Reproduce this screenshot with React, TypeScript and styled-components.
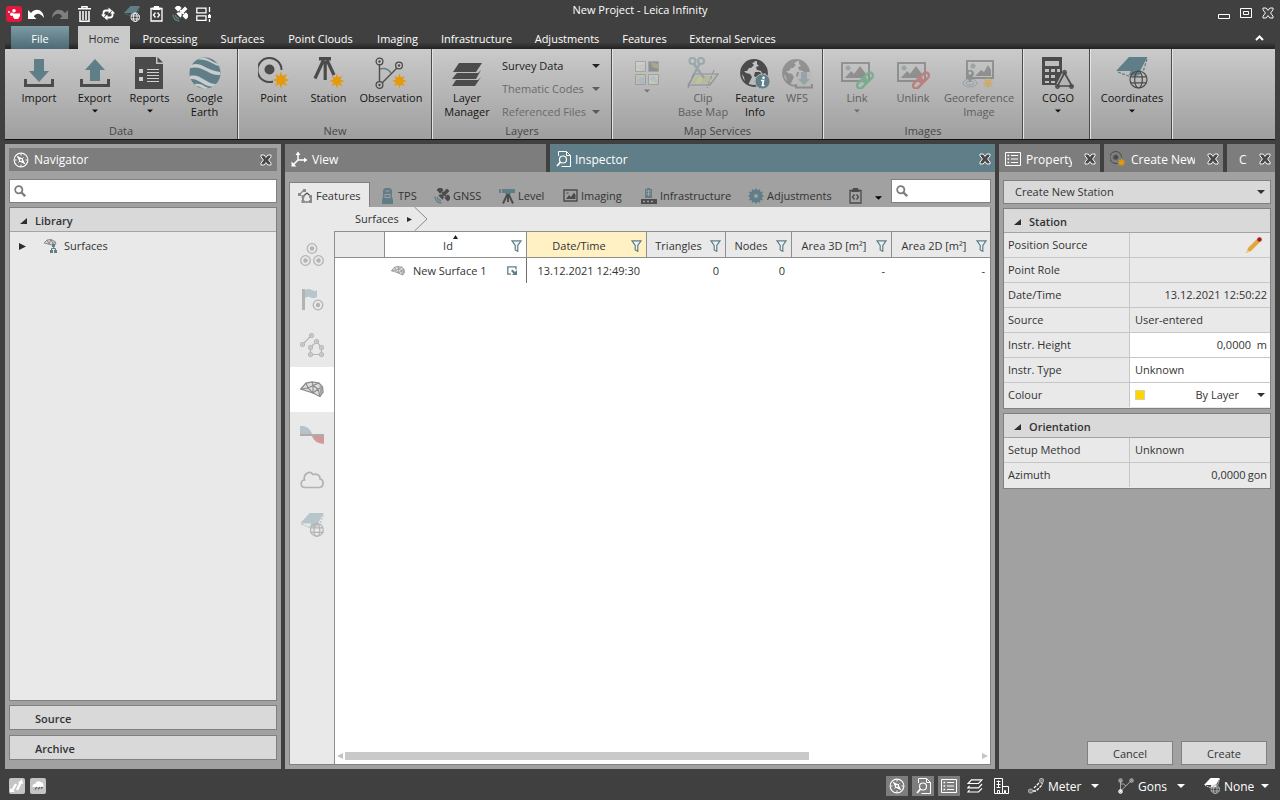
import React from 'react';
import styled, { createGlobalStyle, css } from 'styled-components';

/* ---------- palette ---------- */
const c = {
  frame: '#404040',
  panel: '#a1a1a1',
  head: '#7d7d7d',
  teal: '#5f7e88',
  line: '#808080',
  cell: '#e9e9e9',
  group: '#d9d9d9',
  ink: '#333333',
  icon: '#4b4b4b',
  amber: '#e59a0c',
};

const GlobalStyle = createGlobalStyle`
  * { box-sizing: border-box; }
  html, body { margin: 0; padding: 0; background: ${c.frame}; }
  body, button, input, select, table {
    font-family: "Open Sans", "Noto Sans", sans-serif;
    font-size: 11px;
    line-height: 14px;
    color: ${c.ink};
  }
  button { border: 0; padding: 0; background: none; }
  svg { display: block; flex: none; }
`;

/* ---------- icons ---------- */
type IconProps = { w?: number; h?: number; box?: string; children?: React.ReactNode };
const Svg = ({ w = 16, h = w, box = `0 0 ${w} ${h}`, children }: IconProps) => (
  <svg width={w} height={h} viewBox={box} fill="none" aria-hidden="true">{children}</svg>
);

const burstPoints = (cx: number, cy: number, outer: number, inner: number, n: number) =>
  Array.from({ length: n * 2 }, (_, i) => {
    const r = i % 2 ? inner : outer;
    const a = (Math.PI * i) / n - Math.PI / 2;
    return `${(cx + r * Math.cos(a)).toFixed(2)},${(cy + r * Math.sin(a)).toFixed(2)}`;
  }).join(' ');

const Burst = ({ x, y, r = 8 }: { x: number; y: number; r?: number }) => (
  <polygon points={burstPoints(x, y, r, r * 0.5, 8)} fill={c.amber} />
);

const Ring = ({ x, y, r = 3, color = c.icon, dot = 1.2, sw = 1.3 }: { x: number; y: number; r?: number; color?: string; dot?: number; sw?: number }) => (
  <>
    <circle cx={x} cy={y} r={r} stroke={color} strokeWidth={sw} />
    <circle cx={x} cy={y} r={dot} fill={color} />
  </>
);

const CloseIcon = () => (
  <Svg w={12} h={12}>
    <path d="M1 1H4.2L6 3.400 7.800 1H11V2.800L8.600 6 11 9.200V11H7.800L6 8.600 4.200 11H1V9.200L3.400 6 1 2.800Z" fill="#484848" stroke="#f4f4f4" strokeWidth="1" />
  </Svg>
);

const Globe = ({ x, y, r, color = c.icon, sw = 1.2 }: { x: number; y: number; r: number; color?: string; sw?: number }) => (
  <g stroke={color} strokeWidth={sw}>
    <circle cx={x} cy={y} r={r} />
    <ellipse cx={x} cy={y} rx={r * 0.45} ry={r} />
    <path d={`M${x - r} ${y - r * 0.3}H${x + r}M${x - r} ${y + r * 0.4}H${x + r}`} />
  </g>
);

const CoordIcon = ({ size = 32, top = c.teal, line = c.icon, sw = 1.2 }: { size?: number; top?: string; line?: string; sw?: number }) => (
  <Svg w={size} box="0 0 32 32">
    <path d="M0 14 13 0H31.500L24 14Z" fill={top} />
    <path d="M2 15 15 20M31 2 27 15" stroke={top} strokeWidth={sw} strokeDasharray="3 1.500" />
    <path d="M16 11 20 13 24 11 25 17 20 19 13 18Z" fill={top} />
    <Globe x={22.500} y={22.500} r={8.500} color={line} sw={sw} />
  </Svg>
);

const Continents = () => (
  <>
    <circle cx="15" cy="15" r="13" stroke={c.icon} strokeWidth="1.800" />
    <path d="M4 8 9 3 14 2 16 4 13 5 15 7 12 10 10 10 8 13 5 13 7 15 11 16 13 19 11 23 9 27 6 24 5 19 2 15Z" fill={c.icon} />
    <path d="M18 2.500 24 5 28 11 28 17 26 15 24 17 22 13 18 12 17 9 20 8 18 6Z" fill={c.icon} />
    <path d="M16 14 21 14 24 18 22 21 20 26 18 25 18 20 15 18Z" fill={c.icon} />
  </>
);

const PictureIcon = ({ children }: { children?: React.ReactNode }) => (
  <Svg w={34} h={32}>
    <rect x="2" y="6" width="27" height="18" stroke={c.icon} strokeWidth="2" />
    <circle cx="8" cy="11" r="2.500" fill={c.teal} />
    <path d="M5 21 11 14 14 17 20 9 26 17V21Z" fill={c.icon} />
    {children}
  </Svg>
);

const ChainLink = ({ color }: { color: string }) => (
  <g stroke={color} strokeWidth="2.400" transform="rotate(-45 25 23.500)">
    <rect x="15" y="20.500" width="11.500" height="6" rx="3" />
    <rect x="23.500" y="20.500" width="11.500" height="6" rx="3" />
  </g>
);

const ImportIcon = () => (
  <Svg w={32}>
    <path d="M11 2H21V14H26L16 25 6 14H11Z" fill={c.teal} />
    <path d="M1 22H4V27H28V22H31V30H1Z" fill={c.icon} />
  </Svg>
);
const ExportIcon = () => (
  <Svg w={32}>
    <path d="M16 2 26 13H21V24H11V13H6Z" fill={c.teal} />
    <path d="M1 22H4V27H28V22H31V30H1Z" fill={c.icon} />
  </Svg>
);
const ReportsIcon = () => (
  <Svg w={30} h={32}>
    <path d="M0 0H21V7H28V32H0Z" fill={c.icon} />
    <path d="M22.500 0 28 5.500H22.500Z" fill={c.icon} />
    <path d="M4 12H8V16H4ZM4 20H8V24H4Z" fill="#d0d0d0" />
    <path d="M12 12.500H24M12 15.500H24M12 18.500H24M12 21.500H24M12 24.500H24" stroke="#d0d0d0" />
  </Svg>
);
const EarthIcon = () => (
  <Svg w={32}>
    <circle cx="16" cy="16" r="15.500" fill={c.teal} />
    <path d="M2 8C12 4 18 14 31 15L31.500 18C19 19 15 8 1 11ZM1 19C11 16 17 27 27 27L24 29.500C15 30 10 21 1 22ZM8 3C17 1 22 7 30 9L29 7C23 5 19 0 12 1ZM6 27C13 26 15 30 20 31L16 32C11 31 11 29 7 29Z" fill="#c9cdce" />
  </Svg>
);
const PointIcon = ({ size = 32 }: { size?: number }) => (
  <Svg w={size} box="0 0 32 32">
    <path d="M15 24.500A12 12 0 1 1 23.500 13" stroke={c.icon} strokeWidth="2" />
    <circle cx="11.500" cy="12.500" r="5" fill={c.icon} />
    <Burst x={23} y={23} r={8.500} />
  </Svg>
);
const StationIcon = () => (
  <Svg w={32}>
    <path d="M6 0H18V3.500H6Z" fill={c.icon} />
    <path d="M10.500 3 2 21.500M14 3 21 18M12.200 4V23" stroke={c.icon} strokeWidth="3.200" />
    <Burst x={24} y={24} r={7.500} />
  </Svg>
);
const ObservationIcon = () => (
  <Svg w={32}>
    <path d="M4.500 7V25M7 26 22 11" stroke={c.icon} strokeWidth="1.400" />
    <path d="M5 12Q12 10 16 16" stroke={c.teal} strokeWidth="1.600" />
    <Ring x={4.500} y={4.500} r={3.400} /><Ring x={4.500} y={28} r={3.400} /><Ring x={24} y={8.500} r={3.400} />
    <Burst x={24.500} y={24} r={7.500} />
  </Svg>
);
const LayersIcon = () => (
  <Svg w={34} h={32}>
    <path d="M9 6H32L26 15H3ZM7 16H28L31 13 26 22H2L6 17M6 23H28L31 20 25 29H2Z" fill={c.icon} />
  </Svg>
);
const TilesIcon = () => (
  <Svg w={26} h={28}>
    <g stroke="#777">
      <path d="M1.500 4.500H11.500V14.500H1.500Z" fill="#d9e0da" />
      <path d="M14.500 4.500H24.500V14.500H14.500Z" fill="#3d4c50" />
      <path d="M1.500 17.500H11.500V27.500H1.500Z" fill="#b9cf9c" />
      <path d="M14.500 17.500H24.500V27.500H14.500Z" fill="#d8dcc8" />
    </g>
    <path d="M2 9 6 8 11 6V14H7Z" fill="#c6cfc0" /><path d="M17 5 24 7V12L18 10Z" fill="#8a7b3c" />
    <path d="M2 23 7 20 11 21V27H7Z" fill="#9ab9c9" /><path d="M15 22 20 18 24 24V27Z" fill="#aac3d1" />
  </Svg>
);
const ClipIcon = () => (
  <Svg w={32}>
    <path d="M8 17H31L23 28H1Z" stroke={c.icon} strokeWidth="1.200" />
    <path d="M10 19H27L21 26H5Z" fill="#9fbf74" /><path d="M12 20 17 19 14 26H8Z" fill="#e2c558" />
    <circle cx="5.500" cy="4" r="3" stroke={c.teal} strokeWidth="2" />
    <circle cx="14" cy="4" r="3" stroke={c.teal} strokeWidth="2" />
    <path d="M7 7 17 21M12.500 7 5 21" stroke={c.teal} strokeWidth="2.600" />
    <path d="M7 17 1 31M27 13 20 31" stroke={c.icon} strokeDasharray="4 2" />
  </Svg>
);
const FeatureInfoIcon = () => (
  <Svg w={32}>
    <g transform="translate(0 1)"><Continents /></g>
    <circle cx="23.500" cy="24.500" r="7.500" fill={c.teal} stroke="#b5b5b5" />
    <circle cx="24.500" cy="20.700" r="1.300" fill="#fff" />
    <path d="M22 23.500H24.500L23.500 28.500H25.500" stroke="#fff" strokeWidth="1.700" />
  </Svg>
);
const WfsIcon = () => (
  <Svg w={32}>
    <g transform="translate(0 1)"><Continents /></g>
    <path d="M18 15H31V30H16V22Z" fill="#b5b5b5" />
    <path d="M20 15H26V22H29L23 28 17 22H20Z" fill={c.teal} />
    <path d="M15 27V30.500H31V27" stroke={c.icon} strokeWidth="2" />
  </Svg>
);
const GeorefIcon = () => (
  <Svg w={34} h={32}>
    <rect x="5" y="4" width="26" height="17" stroke={c.icon} strokeWidth="2" />
    <circle cx="11" cy="9" r="2.500" fill={c.teal} />
    <path d="M13 19 19 13 22 15 26 8 29 13V19Z" fill={c.icon} />
    <ellipse cx="8" cy="26" rx="7" ry="4" stroke={c.teal} /><ellipse cx="8" cy="26" rx="4" ry="2" stroke={c.teal} />
    <path d="M8 26 4 17A4 4 0 1 1 12 17Z" fill={c.icon} />
    <circle cx="8" cy="16" r="1.500" fill="#ccc" />
    <Burst x={26} y={26} r={6} />
  </Svg>
);
const CogoIcon = () => (
  <Svg w={32}>
    <path d="M0 0H20V18L15 28H0Z" fill={c.icon} />
    <path d="M3 4H17V9H3Z" fill="#bebebe" />
    <path d="M3 12H7V15H3ZM9 12H13V15H9ZM15 12H18V15H15ZM3 18H7V21H3ZM9 18H13V21H9ZM3 24H7V26H3ZM9 24H13V26H9Z" fill="#bebebe" />
    <path d="M22.500 11 33 32H12Z" fill="#b4b4b4" />
    <path d="M22.500 16 30 29H15.500Z" stroke={c.icon} strokeWidth="1.600" />
    <Ring x={22.500} y={15.500} r={1.800} /><Ring x={29.500} y={29.500} r={1.800} /><Ring x={15.500} y={29.500} r={1.800} />
  </Svg>
);

const SearchIcon = () => (
  <Svg w={12}>
    <circle cx="4.800" cy="4.800" r="3.600" stroke={c.head} strokeWidth="1.800" />
    <path d="M7.500 7.500 11.200 11.200" stroke={c.head} strokeWidth="2.400" />
  </Svg>
);
const FilterIcon = () => (
  <Svg w={11} h={12}>
    <path d="M1 .8H10L6.800 5.500V11.300L4.200 10V5.500Z" fill="#eef1f2" stroke={c.teal} strokeWidth="1.200" />
  </Svg>
);
const CompassIcon = () => (
  <Svg w={16}>
    <circle cx="8" cy="8" r="6.900" stroke="#fff" strokeWidth="1.100" />
    <path d="M8 1.500V3.500M8 12.500V14.500M1.500 8H3.500M12.500 8H14.500" stroke="#fff" />
    <path d="M3.500 3.500 9.500 6.500 12.500 12.500 6.500 9.500Z" fill="#fff" />
    <path d="M10.500 5.500 5.500 10.500" stroke="#fff" strokeWidth="1" />
    <circle cx="8" cy="8" r="1" fill={c.head} />
  </Svg>
);
const AxesIcon = () => (
  <Svg w={17} h={16}>
    <path d="M7 2V9H15M7 9 2 14" stroke="#fff" strokeWidth="1.500" />
    <path d="M4.500 4 7 .5 9.500 4ZM13 6.500 16.500 9 13 11.500ZM.5 10.500V15.500H5.500Z" fill="#fff" />
  </Svg>
);
const InspectIcon = () => (
  <Svg w={15} h={16}>
    <path d="M2.500 5V.5H10.500L14.500 4.500V15.500H5.500M10.500 .5V4.500H14.500" stroke="#fff" />
    <circle cx="7" cy="8.500" r="3.500" stroke="#fff" strokeWidth="1.200" />
    <path d="M4.500 11 1 15" stroke="#fff" strokeWidth="1.800" />
  </Svg>
);
const ListIcon = () => (
  <Svg w={16} h={14}>
    <path d="M.5 .5H15.500V13.500H.5ZM6 3.500H13M6 7H13M6 10.500H13" stroke="#fff" />
    <path d="M2.500 2.700H4.200V4.300H2.500ZM2.500 6.200H4.200V7.800H2.500ZM2.500 9.700H4.200V11.300H2.500Z" fill="#fff" />
  </Svg>
);
const SatelliteIcon = ({ body = c.icon, wave = c.teal }: { body?: string; wave?: string }) => (
  <Svg w={16}>
    <g transform="rotate(45 10 6)" fill={body}>
      <path d="M2 3.500H7V8.500H2ZM13 3.500H18V8.500H13Z" />
      <path d="M7 5.300H13V6.700H7Z" />
      <path d="M8.200 0H11.800V7.500H8.200ZM7 11Q7.500 7.500 10 7.500T13 11Z" />
    </g>
    <path d="M1 8.500Q1.500 14.500 7.500 15M3.300 9Q3.800 12.200 7 12.700" stroke={wave} strokeWidth="1.400" />
  </Svg>
);
const SurfaceIcon = ({ size = 24, line = '#8a8a8a' }: { size?: number; line?: string }) => (
  <Svg w={size} h={Math.round(size * 0.7)} box="0 0 24 17">
    <path d="M.8 8 6 2 12 .8 19 2 22.500 6 23 11 20 15.500 13 12Z" fill="#dedede" stroke={line} strokeWidth="1.300" />
    <path d="M6 2 8 7 13 4.500 19 2M.8 8 8 7 13 12 13 4.500 12 .8M13 4.500 18 8 22.500 6M18 8 20 15.500M13 12 18 8" stroke={line} strokeWidth="1.100" />
    <path d="M19.500 4 22 6 22.500 11 20 14Z" fill="#a5a5a5" />
  </Svg>
);
const ClipboardIcon = ({ color = c.icon }: { color?: string }) => (
  <Svg w={13} h={16}>
    <path d="M1 2.500H12V15H1Z" stroke={color} strokeWidth="1.300" />
    <path d="M4 0H9V1.500H10.500V4H2.500V1.500H4Z" fill={color} />
    <path d="M5.500 6.500 3.500 9 5.500 11.500M7.500 6.500 9.500 9 7.500 11.500" stroke={color} strokeWidth="1.300" />
  </Svg>
);
const PolylineIcon = ({ color = '#b5b5b5' }: { color?: string }) => (
  <Svg w={24}>
    <path d="M4 10 10 4M10.500 19V17M13 21.500H19M21.500 19V17M12 13 14.500 10.500M18 10 20 13" stroke={color} strokeWidth="1.200" />
    {[[2.500, 11.500], [11.500, 2.500], [10.500, 14.500], [16.500, 8.500], [21.500, 14.500], [10.500, 21.500], [21.500, 21.500]].map(([x, y]) => (
      <Ring key={`${x}-${y}`} x={x} y={y} r={1.900} color={color} dot={0.800} sw={1.200} />
    ))}
  </Svg>
);
const Caret = ({ color = '#111', w = 8 }: { color?: string; w?: number }) => (
  <Svg w={w} h={4} box="0 0 8 4"><path d="M0 0H8L4 4Z" fill={color} /></Svg>
);
const Expanded = () => <Svg w={7} h={6}><path d="M7 0V6H0Z" fill="#2e2e2e" /></Svg>;
const Collapsed = ({ size = 6 }: { size?: number }) => <Svg w={size} box="0 0 6 6"><path d="M0 0 6 3 0 6Z" fill="#2e2e2e" /></Svg>;

/* ---------- shell ---------- */
const Window = styled.div`
  min-height: 100vh;
  display: flex;
  flex-direction: column;
  background: ${c.frame};
`;
const TitleBar = styled.header`
  display: grid;
  grid-template-columns: 1fr auto 1fr;
  height: 26px;
  padding: 0 6px;
`;
const QuickAccess = styled.div`
  display: flex;
  align-items: center;
  gap: 2px;
  padding-top: 2px;
`;
const QuickButtons = styled.div`display: flex;`;
const QuickButton = styled.button`
  width: 24px;
  height: 20px;
  display: grid;
  place-items: center;
`;
const WindowTitle = styled.h1`
  margin: 0;
  padding-top: 3px;
  font-size: 11px;
  font-weight: 400;
  color: #fff;
`;
const WindowButtons = styled.div`
  display: flex;
  justify-content: flex-end;
  align-items: center;
  gap: 10px;
`;
const TabStrip = styled.nav`
  display: flex;
  height: 23px;
  margin: 0 5px;
  padding-left: 6px;
  background: linear-gradient(${c.frame} 70%, #232323);
`;
const RibbonTab = styled.button<{ $w: number; $kind?: 'file' | 'active' }>`
  width: ${p => p.$w}px;
  padding-top: 2px;
  color: #fff;
  ${p => p.$kind === 'file' && css`
    margin-right: 9px;
    background: linear-gradient(#7f9aa4, #4c6b76);
  `}
  ${p => p.$kind === 'active' && css`
    margin-right: 1px;
    background: #cacaca;
    color: ${c.ink};
  `}
`;
const CollapseButton = styled.button`
  margin-left: auto;
  padding-right: 11px;
`;
const Ribbon = styled.section`
  display: flex;
  height: 91px;
  margin: 0 5px;
  background: linear-gradient(#cacaca, #9f9f9f);
  border-bottom: 1px solid #101010;
`;
const RibbonGroup = styled.div<{ $w: number }>`
  width: ${p => p.$w}px;
  flex: none;
  display: flex;
  flex-direction: column;
  border-right: 1px solid #4c4c4c;
  border-left: 1px solid #e4e4e4;
  &:first-child { border-left: 0; }
`;
const RibbonTail = styled.div`flex: 1; border-left: 1px solid #e4e4e4;`;
const GroupTools = styled.div<{ $pad: number }>`
  flex: 1;
  display: flex;
  align-items: flex-start;
  padding: 8px 0 0 ${p => p.$pad}px;
`;
const GroupName = styled.div`
  height: 15px;
  text-align: center;
  color: #454545;
`;
const ToolButton = styled.button<{ $w: number }>`
  width: ${p => p.$w}px;
  flex: none;
  display: flex;
  flex-direction: column;
  align-items: center;
  gap: 2px;
  color: #141414;
  white-space: pre;
  &:disabled { color: #5e5e5e; }
  &:disabled svg { opacity: 0.4; }
`;
const ToolText = styled.span`display: block;`;
const ToolCaret = styled.span`padding-top: 2px;`;
const DropList = styled.div`
  display: flex;
  flex-direction: column;
  gap: 9px;
  padding: 2px 0 0 7px;
`;
const DropButton = styled.button`
  width: 98px;
  display: flex;
  justify-content: space-between;
  align-items: center;
  white-space: nowrap;
  color: #1c1c1c;
  &:disabled { color: #6a6a6a; }
  &:disabled svg { opacity: 0.6; }
`;
const Workspace = styled.main`
  flex: 1;
  display: flex;
  gap: 4px;
  padding: 4px 5px 0;
`;

/* ---------- panels ---------- */
const SidePanel = styled.aside`
  width: 276px;
  flex: none;
  display: flex;
  flex-direction: column;
  background: ${c.panel};
`;
const NavPanel = styled(SidePanel)`padding: 4px 4px 9px;`;
const PanelHead = styled.div`
  height: 23px;
  display: flex;
  align-items: center;
  gap: 5px;
  padding: 0 5px 0 4px;
  background: ${c.head};
  color: #fff;
  font-size: 12px;
`;
const Grow = styled.span`
  flex: 1;
  min-width: 0;
  line-height: 18px;
  white-space: nowrap;
  text-align: left;
`;
const Title = styled(Grow)`padding-top: 1px;`;
const ClippedTitle = styled(Title)`
  margin-right: 7px;
  overflow: hidden;
`;
const SearchBox = styled.label`
  height: 24px;
  display: flex;
  align-items: center;
  gap: 4px;
  padding: 0 4px;
  border: 1px solid ${c.line};
  background: #fff;
`;
const SearchInput = styled.input`
  flex: 1;
  min-width: 0;
  border: 0;
  padding: 0;
  outline: 0;
  background: transparent;
`;
const NavSearch = styled.div`margin: 8px 0 4px;`;
const Tree = styled.div`
  flex: 1;
  border: 1px solid ${c.line};
  background: ${c.cell};
`;
const SectionHead = styled.button`
  width: 100%;
  height: 24px;
  display: flex;
  align-items: center;
  gap: 8px;
  padding: 2px 10px 0;
  background: ${c.group};
  border-bottom: 1px solid #a4a4a8;
  font-weight: 600;
`;
const TreeItem = styled.button`
  width: 100%;
  height: 28px;
  display: flex;
  align-items: center;
  gap: 4px;
  padding-left: 9px;
`;
const TreeIcon = styled.span`padding-left: 12px;`;
const Accordion = styled.button`
  height: 25px;
  margin-top: 4px;
  padding: 2px 0 0 25px;
  text-align: left;
  font-weight: 600;
  background: ${c.group};
  border: 1px solid ${c.line};
  & + & { margin-top: 5px; }
`;
const Center = styled.section`
  flex: 1;
  min-width: 0;
  display: flex;
  flex-direction: column;
  background: ${c.panel};
`;
const DockTabs = styled.div`
  display: flex;
  gap: 4px;
  background: ${c.frame};
`;
const DockTab = styled.div<{ $w?: number; $on?: boolean; $gap?: number }>`
  ${p => (p.$w ? `width: ${p.$w}px; flex: none;` : 'flex: 1; min-width: 0;')}
  height: 28px;
  display: flex;
  align-items: center;
  gap: ${p => p.$gap ?? 4}px;
  padding: 2px 4px 0 6px;
  background: ${p => (p.$on ? c.teal : c.head)};
  color: #fff;
  font-size: 12px;
`;
const InspectorBody = styled.div`
  flex: 1;
  min-height: 0;
  display: flex;
  flex-direction: column;
  padding: 7px 4px 4px;
`;
const InspectorBar = styled.div`display: flex; align-items: flex-start; overflow: hidden; height: 28px;`;
const InspectorTab = styled.button<{ $w: number; $on?: boolean }>`
  width: ${p => p.$w}px;
  height: 25px;
  flex: none;
  margin-top: 3px;
  display: flex;
  align-items: center;
  gap: 3px;
  padding: 2px 0 0 8px;
  border: 1px solid ${p => (p.$on ? c.line : 'transparent')};
  border-bottom: 0;
  background: ${p => (p.$on ? c.cell : 'transparent')};
`;
const MoreButton = styled.button`flex: 1; padding: 17px 0 0 7px;`;
const InspectorSearch = styled.div`width: 100px; flex: none;`;
const InspectorContent = styled.div`
  flex: 1;
  display: flex;
  border: 1px solid ${c.line};
  border-top: 0;
  background: ${c.cell};
`;
const Rail = styled.div`
  width: 44px;
  flex: none;
  padding-top: 25px;
`;
const RailButton = styled.button<{ $on?: boolean }>`
  width: 100%;
  height: 45px;
  display: grid;
  place-items: center;
  background: ${p => (p.$on ? '#fff' : 'transparent')};
`;
const Sheet = styled.div`flex: 1; min-width: 0; display: flex; flex-direction: column;`;
const Crumbs = styled.div`
  height: 24px;
  display: flex;
  align-items: center;
  padding-left: 21px;
`;
const CrumbLink = styled.button`display: flex; align-items: center; gap: 8px;`;
const TableArea = styled.div`
  flex: 1;
  display: flex;
  flex-direction: column;
  justify-content: space-between;
  overflow: hidden;
  border: 1px solid #8e8e8e;
  border-width: 1px 0 0 1px;
  background: #fff;
`;
const Grid = styled.table`
  width: 657px;
  table-layout: fixed;
  border-collapse: separate;
  border-spacing: 0;
`;
const HeadCell = styled.th<{ $tone?: 'plain' | 'sort' }>`
  position: relative;
  height: 26px;
  padding: 2px 4px 0 0;
  font-weight: 400;
  background: ${p => (p.$tone === 'plain' ? '#fff' : p.$tone === 'sort' ? '#fff1c4' : c.cell)};
  border-right: 1px solid #8e8e8e;
  border-bottom: 1px solid #8e8e8e;
`;
const HeadInner = styled.div`display: flex; align-items: center; white-space: nowrap;`;
const HeadLabel = styled.span`flex: 1; text-align: center;`;
const SortMark = styled.span`position: absolute; top: 3px; left: 68px;`;
const Cell = styled.td<{ $edge?: boolean }>`
  height: 25px;
  padding: 0 6px;
  text-align: right;
  white-space: nowrap;
  border-right: 1px solid ${p => (p.$edge ? '#6e6e6e' : 'transparent')};
`;
const IdInner = styled.div`
  display: flex;
  align-items: center;
  gap: 8px;
  padding-right: 3px;
`;
const ScrollBar = styled.div`
  display: flex;
  align-items: center;
  gap: 2px;
  height: 16px;
  padding: 0 2px;
`;
const ScrollTrack = styled.div`flex: 1; height: 8px;`;
const ScrollThumb = styled.div`width: 73%; height: 8px; background: #c9c9c9;`;

const Form = styled.form`
  flex: 1;
  display: flex;
  flex-direction: column;
  gap: 4px;
  padding: 8px 4px 4px;
`;
const ModeWrap = styled.div`position: relative; display: flex;`;
const SelectWrap = styled.div`position: relative; display: flex; flex: 1; min-width: 0;`;
const SelectCaret = styled.span<{ $right: number }>`
  position: absolute;
  right: ${p => p.$right}px;
  top: 50%;
  margin-top: -2px;
  pointer-events: none;
`;
const ModeSelect = styled.select`
  flex: 1;
  height: 24px;
  padding: 0 20px 0 11px;
  appearance: none;
  border: 1px solid ${c.line};
  border-radius: 0;
  background: ${c.group};
`;
const PropGroup = styled.div`border: 1px solid ${c.line}; background: ${c.cell};`;
const PropRow = styled.label`
  height: 25px;
  display: flex;
  align-items: stretch;
  border-bottom: 1px solid #c6c6c6;
  &:last-child { border-bottom-color: transparent; }
`;
const PropName = styled.span`
  width: 126px;
  padding: 5px 4px 0;
  border-right: 1px solid #c6c6c6;
`;
const PropValue = styled.span<{ $edit?: boolean }>`
  flex: 1;
  min-width: 0;
  display: flex;
  align-items: center;
  gap: 2px;
  padding: 0 3px 0 5px;
  background: ${p => (p.$edit ? '#fff' : 'transparent')};
`;
const PropInput = styled.input<{ $right?: boolean }>`
  flex: 1;
  min-width: 0;
  border: 0;
  padding: 0;
  outline: 0;
  background: transparent;
  text-align: ${p => (p.$right ? 'right' : 'left')};
`;
const Unit = styled.span`min-width: 14px; text-align: right;`;
const Swatch = styled.span`width: 10px; height: 10px; background: #ffd500; border: 1px solid #d8cfae;`;
const ColourSelect = styled.select`
  flex: 1;
  min-width: 0;
  appearance: none;
  border: 0;
  padding: 0 28px 0 0;
  background: transparent;
  text-align: right;
  text-align-last: right;
`;
const EditButton = styled.button`margin: 0 5px 0 auto;`;
const FormActions = styled.div`
  margin-top: auto;
  display: flex;
  justify-content: flex-end;
  gap: 8px;
  padding-right: 4px;
`;
const ActionButton = styled.button`
  width: 86px;
  height: 24px;
  padding-top: 1px;
  border: 1px solid ${c.line};
  background: ${c.group};
`;

const StatusBar = styled.footer`
  height: 31px;
  display: flex;
  align-items: center;
  gap: 4px;
  padding: 3px 6px 0 9px;
`;
const StatusTile = styled.button`
  width: 16px;
  height: 16px;
  margin-right: 1px;
  display: grid;
  place-items: center;
  border-radius: 2px;
  background: #c4c4c4;
`;
const StatusSpace = styled.span`flex: 1;`;
const StatusToggle = styled.button<{ $on?: boolean }>`
  width: 22px;
  height: 20px;
  display: grid;
  place-items: center;
  background: ${p => (p.$on ? c.head : 'transparent')};
`;
const StatusSpaceSmall = styled.span`width: 8px;`;
const StatusGap = styled.span`width: 6px;`;
const UnitButton = styled.button<{ $w: number }>`
  width: ${p => p.$w}px;
  height: 20px;
  display: flex;
  align-items: center;
  gap: 4px;
  padding-right: 5px;
  color: #fff;
  font-size: 12px;
`;

/* ---------- data ---------- */
const ribbonTabs: [string, number][] = [
  ['Processing', 78], ['Surfaces', 67], ['Point Clouds', 89], ['Imaging', 65], ['Infrastructure', 93],
  ['Adjustments', 88], ['Features', 67], ['External Services', 109],
];

type ToolProps = { label: string; w: number; icon: React.ReactNode; menu?: boolean; disabled?: boolean };
const Tool = ({ label, w, icon, menu, disabled }: ToolProps) => (
  <ToolButton $w={w} disabled={disabled} aria-label={label.replace('\n', ' ') || 'Base maps'}>
    {icon}
    {label && <ToolText>{label}</ToolText>}
    {menu && <ToolCaret><Caret w={6} /></ToolCaret>}
  </ToolButton>
);

const TpsIcon = () => (
  <Svg w={16}><path d="M6 0H11L13 2V9L14 12V16H3V12L4 9V2Z" fill={c.teal} /><path d="M6.500 3H10.500M6 6.500H11V9.500H6Z" stroke="#a1a1a1" /></Svg>
);
const LevelIcon = () => (
  <Svg w={16}><path d="M0 1H2V5H0ZM3 1H16V5H12V6H6V5H3Z" fill={c.teal} /><path d="M8.500 6 4 15.500M9 6V14M9.500 6 14 15.500" stroke={c.icon} strokeWidth="1.900" /></Svg>
);
const ImageSmall = () => (
  <Svg w={15} h={14}><path d="M1 1H14V12H1Z" stroke={c.icon} strokeWidth="1.400" /><path d="M3 10 6 6 8 8 11 3.500 12.500 6V10Z" fill={c.icon} /><circle cx="4.500" cy="4" r="1.300" fill={c.teal} /></Svg>
);
const InfraIcon = () => (
  <Svg w={16}><path d="M4 1H6V0H9V1H11V10H4Z" fill={c.teal} /><path d="M5 3H10M5 6H10M7.500 2V8" stroke="#a1a1a1" /><path d="M0 11H16V16H0Z" fill={c.icon} /><path d="M2 13.500H4M6 13.500H8M10 13.500H12" stroke="#a1a1a1" strokeWidth="1.500" /></Svg>
);
const GearIcon = () => (
  <Svg w={16}><polygon points={burstPoints(8, 8, 8.500, 5.500, 12)} fill={c.teal} /><circle cx="8" cy="8" r="6.300" fill={c.teal} /><circle cx="8" cy="8" r="2" fill="#a1a1a1" /></Svg>
);

const inspectorTabs: [string, number, React.ReactNode][] = [
  ['TPS', 55, <TpsIcon />],
  ['GNSS', 65, <SatelliteIcon />],
  ['Level', 64, <LevelIcon />],
  ['Imaging', 78, <ImageSmall />],
  ['Infrastructure', 107, <InfraIcon />],
  ['Adjustments', 101, <GearIcon />],
];

const faded = '#b3b3b3';
const railItems: [string, React.ReactNode][] = [
  ['Points', <Svg w={24}><Ring x={12} y={5.500} r={4.800} dot={2.200} color={faded} /><Ring x={5.500} y={17.500} r={4.800} dot={2.200} color={faded} /><Ring x={18.500} y={17.500} r={4.800} dot={2.200} color={faded} /></Svg>],
  ['Coded points', <Svg w={24}><path d="M2 1H5V22H2Z" fill={faded} /><path d="M5 2Q9 0 12 2T17 2V9Q14 11 11 9.500T5 10Z" fill="#b8c5ca" /><Ring x={18} y={17} r={4.800} dot={2.200} color={faded} /></Svg>],
  ['Lines and areas', <PolylineIcon color={faded} />],
  ['Surfaces', <SurfaceIcon />],
  ['Cut and fill', <Svg w={24}><path d="M0 3Q9 2 12 11H0Z" fill="#b5c3c8" /><path d="M12 13H24V21Q14 20 12 13Z" fill="#cf9a9a" /><path d="M0 11H24V13H0Z" fill="#adadad" /></Svg>],
  ['Point clouds', <Svg w={24}><path d="M5 19.500C-.5 19.500 .5 12 4.500 12 3 6 10 2 13 6.500 17 5 20.500 8 20 11 24.500 12 24 19.500 19 19.500Z" stroke={faded} strokeWidth="1.700" /></Svg>],
  ['Coordinate systems', <CoordIcon size={24} top="#b8c5ca" line={faded} sw={1.600} />],
];

const columns: { name: string; w: number; tone?: 'plain' | 'sort' }[] = [
  { name: 'Id', w: 142, tone: 'plain' },
  { name: 'Date/Time', w: 120, tone: 'sort' },
  { name: 'Triangles', w: 79 },
  { name: 'Nodes', w: 66 },
  { name: 'Area 3D [m²]', w: 100 },
  { name: 'Area 2D [m²]', w: 100 },
];

/* ---------- sections ---------- */
const Header = () => (
  <>
    <TitleBar>
      <QuickAccess>
        <Svg w={16}>
          <rect width="16" height="16" rx="3" fill="#e4173e" />
          <path d="M7 7.500H14V10L12 13H8.500L7 11Z" fill="#fff" />
          <circle cx="8" cy="4.800" r="1.800" fill="#fff" /><circle cx="5.800" cy="8.300" r="1.800" fill="#fff" /><circle cx="3" cy="6" r="1" fill="#fff" />
        </Svg>
        <QuickButtons>
          <QuickButton aria-label="Undo"><Svg><path d="M0 4V13H8.500L5.800 10.500C8 7 12 6.500 16 12 15.500 4 8 1 3 7Z" fill="#fff" /></Svg></QuickButton>
          <QuickButton aria-label="Redo"><Svg><path d="M16 4V13H7.500L10.200 10.500C8 7 4 6.500 0 12 .5 4 8 1 13 7Z" fill="#7f7f7f" /></Svg></QuickButton>
          <QuickButton aria-label="Delete"><Svg w={13} h={16}><path d="M0 2.800H13M4 2.500V.8H9V2.500" stroke="#fff" strokeWidth="1.500" /><path d="M2 5V15.200H11V5M5 5V14M8 5V14" stroke="#fff" strokeWidth="1.500" /></Svg></QuickButton>
          <QuickButton aria-label="Refresh"><Svg w={14}><path d="M2.500 8V6Q2.500 3.500 5 3.500H8M11.500 6V8Q11.500 10.500 9 10.500H6" stroke="#fff" strokeWidth="1.800" /><path d="M7.500 .5 11 3.500 7.500 6.500ZM6.500 7.500 3 10.500 6.500 13.500Z" fill="#fff" /><path d="M0 7.500H5L2.500 10.500ZM9 6.500H14L11.500 3.500Z" fill="#fff" /></Svg></QuickButton>
          <QuickButton aria-label="Coordinate system"><CoordIcon size={16} line="#fff" sw={1.700} /></QuickButton>
          <QuickButton aria-label="Code tables"><ClipboardIcon color="#fff" /></QuickButton>
          <QuickButton aria-label="GNSS"><SatelliteIcon body="#fff" /></QuickButton>
          <QuickButton aria-label="Layout"><Svg w={16} h={15}><path d="M.8 1.200H10V5.800H.8ZM.8 8.800H10V13.400H.8ZM13.500 0V5M13.500 7V8M13.500 12V15" stroke="#fff" strokeWidth="1.300" /><path d="M12 8H15V11H12Z" fill="#fff" /></Svg></QuickButton>
        </QuickButtons>
      </QuickAccess>
      <WindowTitle>New Project - Leica Infinity</WindowTitle>
      <WindowButtons>
        <button aria-label="Minimize"><Svg w={12}><path d="M.5 7.500H11.500V11.500H.5Z" stroke="#fff" /></Svg></button>
        <button aria-label="Restore"><Svg w={12} h={10}><path d="M.5 .5H11.500V9.500H.5ZM3.500 3.500H8.500V6.500H3.500Z" stroke="#fff" /></Svg></button>
        <button aria-label="Close"><CloseIcon /></button>
      </WindowButtons>
    </TitleBar>
    <TabStrip>
      <RibbonTab $w={58} $kind="file">File</RibbonTab>
      <RibbonTab $w={52} $kind="active">Home</RibbonTab>
      {ribbonTabs.map(([name, w]) => <RibbonTab key={name} $w={w}>{name}</RibbonTab>)}
      <CollapseButton aria-label="Collapse ribbon"><Svg w={9} h={6}><path d="M1 5 4.500 1.500 8 5" stroke="#fff" strokeWidth="2" /></Svg></CollapseButton>
    </TabStrip>
  </>
);

const RibbonBar = () => (
  <Ribbon>
    <RibbonGroup $w={233}>
      <GroupTools $pad={6}>
        <Tool w={56} label="Import" icon={<ImportIcon />} />
        <Tool w={55} label="Export" icon={<ExportIcon />} menu />
        <Tool w={55} label="Reports" icon={<ReportsIcon />} menu />
        <Tool w={55} label={'Google\nEarth'} icon={<EarthIcon />} />
      </GroupTools>
      <GroupName>Data</GroupName>
    </RibbonGroup>
    <RibbonGroup $w={194}>
      <GroupTools $pad={7}>
        <Tool w={55} label="Point" icon={<PointIcon />} />
        <Tool w={55} label="Station" icon={<StationIcon />} />
        <Tool w={70} label="Observation" icon={<ObservationIcon />} />
      </GroupTools>
      <GroupName>New</GroupName>
    </RibbonGroup>
    <RibbonGroup $w={180}>
      <GroupTools $pad={6}>
        <Tool w={56} label={'Layer\nManager'} icon={<LayersIcon />} />
        <DropList>
          <DropButton>Survey Data<Caret color="#222" /></DropButton>
          <DropButton disabled>Thematic Codes<Caret color="#222" /></DropButton>
          <DropButton disabled>Referenced Files<Caret color="#222" /></DropButton>
        </DropList>
      </GroupTools>
      <GroupName>Layers</GroupName>
    </RibbonGroup>
    <RibbonGroup $w={211}>
      <GroupTools $pad={8}>
        <Tool w={52} label="" icon={<TilesIcon />} menu disabled />
        <Tool w={60} label={'Clip\nBase Map'} icon={<ClipIcon />} disabled />
        <Tool w={44} label={'Feature\nInfo'} icon={<FeatureInfoIcon />} />
        <Tool w={40} label="WFS" icon={<WfsIcon />} disabled />
      </GroupTools>
      <GroupName>Map Services</GroupName>
    </RibbonGroup>
    <RibbonGroup $w={200}>
      <GroupTools $pad={5}>
        <Tool w={56} label="Link" icon={<PictureIcon><ChainLink color="#199a50" /></PictureIcon>} menu disabled />
        <Tool w={56} label="Unlink" icon={<PictureIcon><ChainLink color="#c02828" /></PictureIcon>} disabled />
        <Tool w={76} label={'Georeference\nImage'} icon={<GeorefIcon />} disabled />
      </GroupTools>
      <GroupName>Images</GroupName>
    </RibbonGroup>
    <RibbonGroup $w={67}>
      <GroupTools $pad={6}><Tool w={56} label="COGO" icon={<CogoIcon />} menu /></GroupTools>
    </RibbonGroup>
    <RibbonGroup $w={82}>
      <GroupTools $pad={6}><Tool w={70} label="Coordinates" icon={<CoordIcon />} menu /></GroupTools>
    </RibbonGroup>
    <RibbonTail />
  </Ribbon>
);

const Navigator = () => (
  <NavPanel>
    <PanelHead>
      <CompassIcon /><Title>Navigator</Title>
      <button aria-label="Close Navigator"><CloseIcon /></button>
    </PanelHead>
    <NavSearch>
      <SearchBox><SearchIcon /><SearchInput aria-label="Search navigator" /></SearchBox>
    </NavSearch>
    <Tree>
      <SectionHead><Expanded />Library</SectionHead>
      <TreeItem>
        <Collapsed size={7} />
        <TreeIcon>
          <Svg w={18} h={16}>
            <path d="M2 5 5 2 9 1.500 13 3.500 14 6 10 7Z" fill="#d6d6d6" stroke="#8a8a8a" /><path d="M5 2 7 6 9 1.500 11 6 13 3.500" stroke="#8a8a8a" />
            <path d="M10 6H13V9H10ZM8 12H11V15H8ZM12 12H15V15H12Z" fill={c.teal} /><path d="M11.500 8V10.500M9.500 13V10.500H13.500V13" stroke={c.teal} />
          </Svg>
        </TreeIcon>
        Surfaces
      </TreeItem>
    </Tree>
    <Accordion>Source</Accordion>
    <Accordion>Archive</Accordion>
  </NavPanel>
);

const Inspector = () => (
  <Center>
    <DockTabs>
      <DockTab $w={261}><AxesIcon /><Title>View</Title></DockTab>
      <DockTab $on><InspectIcon /><Title>Inspector</Title><button aria-label="Close Inspector"><CloseIcon /></button></DockTab>
    </DockTabs>
    <InspectorBody>
      <InspectorBar>
        <InspectorTab $w={81} $on>
          <Svg w={15} h={14}><path d="M1 6 6 1" stroke="#8b8b8b" strokeWidth="1.300" /><path d="M5 13V7.500L9 4 13 7.500V13Z" stroke={c.icon} strokeWidth="1.200" /><path d="M0 4H3V7H0ZM5 0H8V3H5ZM3.500 6H6.500V9H3.500ZM11 6H14V9H11ZM3.500 11H6.500V14H3.500ZM11 11H14V14H11Z" fill="#8b8b8b" /></Svg>
          Features
        </InspectorTab>
        {inspectorTabs.map(([name, w, icon]) => <InspectorTab key={name} $w={w}>{icon}{name}</InspectorTab>)}
        <InspectorTab $w={28} aria-label="Code tables"><ClipboardIcon /></InspectorTab>
        <MoreButton aria-label="More tabs"><Caret color="#000" w={7} /></MoreButton>
        <InspectorSearch>
          <SearchBox><SearchIcon /><SearchInput aria-label="Search inspector" /></SearchBox>
        </InspectorSearch>
      </InspectorBar>
      <InspectorContent>
        <Rail>
          {railItems.map(([name, icon]) => <RailButton key={name} $on={name === 'Surfaces'} aria-label={name}>{icon}</RailButton>)}
        </Rail>
        <Sheet>
          <Crumbs>
            <CrumbLink>Surfaces<Collapsed size={5} /></CrumbLink>
            <Svg w={18} h={24}><path d="M2.500 0 15 12 2.500 24" stroke="#8a8a8a" /></Svg>
          </Crumbs>
          <TableArea>
            <Grid>
              <colgroup>
                <col width={50} />
                {columns.map(col => <col key={col.name} width={col.w} />)}
              </colgroup>
              <thead>
                <tr>
                  <HeadCell aria-label="Row" />
                  {columns.map(col => (
                    <HeadCell key={col.name} $tone={col.tone}>
                      {col.tone === 'plain' && <SortMark><Svg w={5} h={4}><path d="M2.500 0 5 4H0Z" fill="#222" /></Svg></SortMark>}
                      <HeadInner><HeadLabel>{col.name}</HeadLabel><FilterIcon /></HeadInner>
                    </HeadCell>
                  ))}
                </tr>
              </thead>
              <tbody>
                <tr>
                  <Cell />
                  <Cell $edge>
                    <IdInner>
                      <SurfaceIcon size={14} />
                      <Grow>New Surface 1</Grow>
                      <Svg w={10} h={9}><path d="M9 3.500V.8H.8V8.200H4" stroke={c.teal} strokeWidth="1.300" /><path d="M10 4V9H5L6.500 7.500 4 5 5.500 3.500 8 6Z" fill={c.teal} /></Svg>
                    </IdInner>
                  </Cell>
                  <Cell>13.12.2021 12:49:30</Cell>
                  <Cell>0</Cell>
                  <Cell>0</Cell>
                  <Cell>-</Cell>
                  <Cell>-</Cell>
                </tr>
              </tbody>
            </Grid>
            <ScrollBar aria-hidden="true">
              <Svg w={6}><path d="M6 0V6L0 3Z" fill="#c4c4c4" /></Svg>
              <ScrollTrack><ScrollThumb /></ScrollTrack>
              <Svg w={6}><path d="M0 0V6L6 3Z" fill="#c4c4c4" /></Svg>
            </ScrollBar>
          </TableArea>
        </Sheet>
      </InspectorContent>
    </InspectorBody>
  </Center>
);

const Properties = () => (
  <SidePanel>
    <DockTabs>
      <DockTab $w={101} $gap={5}><ListIcon /><ClippedTitle>Property</ClippedTitle><button aria-label="Close Property"><CloseIcon /></button></DockTab>
      <DockTab $w={119} $gap={5}><PointIcon size={16} /><ClippedTitle>Create New</ClippedTitle><button aria-label="Close Create New"><CloseIcon /></button></DockTab>
      <DockTab $gap={5}><Svg w={1} /><Title>C</Title><button aria-label="Close tab"><CloseIcon /></button></DockTab>
    </DockTabs>
    <Form onSubmit={e => e.preventDefault()}>
      <ModeWrap>
        <ModeSelect aria-label="Tool" defaultValue="station"><option value="station">Create New Station</option></ModeSelect>
        <SelectCaret $right={6}><Caret color="#333" /></SelectCaret>
      </ModeWrap>
      <PropGroup>
        <SectionHead type="button"><Expanded />Station</SectionHead>
        <PropRow as="div">
          <PropName>Position Source</PropName>
          <PropValue>
            <EditButton type="button" aria-label="Edit position source">
              <Svg w={16}><path d="M2 11 11 2 14 5 5 14 0 16Z" fill="#e3a63d" /><path d="M1 13.500 2.500 15" stroke="#fff" /><circle cx="13.500" cy="2.500" r="2.300" fill="#a61d1d" /></Svg>
            </EditButton>
          </PropValue>
        </PropRow>
        <PropRow as="div"><PropName>Point Role</PropName><PropValue /></PropRow>
        <PropRow><PropName>Date/Time</PropName><PropValue><PropInput readOnly $right defaultValue="13.12.2021 12:50:22" /></PropValue></PropRow>
        <PropRow><PropName>Source</PropName><PropValue><PropInput readOnly defaultValue="User-entered" /></PropValue></PropRow>
        <PropRow><PropName>Instr. Height</PropName><PropValue $edit><PropInput $right defaultValue="0,0000" /><Unit>m</Unit></PropValue></PropRow>
        <PropRow><PropName>Instr. Type</PropName><PropValue $edit><PropInput defaultValue="Unknown" /></PropValue></PropRow>
        <PropRow>
          <PropName>Colour</PropName>
          <PropValue $edit>
            <Swatch />
            <SelectWrap>
              <ColourSelect defaultValue="layer"><option value="layer">By Layer</option></ColourSelect>
              <SelectCaret $right={2}><Caret color="#333" /></SelectCaret>
            </SelectWrap>
          </PropValue>
        </PropRow>
      </PropGroup>
      <PropGroup>
        <SectionHead type="button"><Expanded />Orientation</SectionHead>
        <PropRow><PropName>Setup Method</PropName><PropValue><PropInput readOnly defaultValue="Unknown" /></PropValue></PropRow>
        <PropRow><PropName>Azimuth</PropName><PropValue><PropInput readOnly $right defaultValue="0,0000" /><Unit>gon</Unit></PropValue></PropRow>
      </PropGroup>
      <FormActions>
        <ActionButton type="button">Cancel</ActionButton>
        <ActionButton type="submit">Create</ActionButton>
      </FormActions>
    </Form>
  </SidePanel>
);

const Status = () => (
  <StatusBar>
    <StatusTile aria-label="Connection"><Svg w={14}><path d="M2 12 6 5M7 11 11 3" stroke="#fff" strokeWidth="2.400" /><path d="M0 9V13H5ZM8 4 12 0 13 5Z" fill="#fff" /></Svg></StatusTile>
    <StatusTile aria-label="Cloud"><Svg w={14}><path d="M1.500 8Q1 5 4.500 4.500 6 1 9.500 3 13 3.500 12.500 8Z" fill="#fff" /><path d="M4 10.500 6 8M7 10.500 9 8M10 9.500 11.500 8" stroke="#555" strokeWidth="1.200" /></Svg></StatusTile>
    <StatusSpace />
    <StatusToggle $on aria-label="Navigator"><CompassIcon /></StatusToggle>
    <StatusToggle $on aria-label="Inspector"><InspectIcon /></StatusToggle>
    <StatusToggle $on aria-label="Property grid"><ListIcon /></StatusToggle>
    <StatusToggle aria-label="Layers"><Svg w={16} h={14}><path d="M4.500 .8H15L11.500 4.500H1ZM2.500 7 1 8.800H11.500L15 5M2.500 11 1 13H11.500L15 9.300" stroke="#fff" strokeWidth="1.200" /></Svg></StatusToggle>
    <StatusToggle aria-label="Buildings"><Svg w={15} h={16}><path d="M.5 .5H8.500V15.500H.5ZM4.500 2.500V9.500M2.500 3.500H6.500M2.500 6.500H6.500M2.500 9.500H6.500M3.500 15V12.500H5.500V15M8.500 8.500H14.500V15.500H11.500V12.500H10.500V15.500H8.500" stroke="#fff" /></Svg></StatusToggle>
    <StatusSpaceSmall />
    <UnitButton $w={76}>
      <Svg w={16}><Ring x={2.500} y={13} r={1.900} color="#aaa" dot={0.800} /><Ring x={13.500} y={2.500} r={1.900} color="#aaa" dot={0.800} /><path d="M5 13H8L14 7V5M6 10 11 5" stroke="#fff" strokeWidth="1.300" strokeDasharray="3 1" /></Svg>
      <Title>Meter</Title><Caret color="#fff" />
    </UnitButton>
    <StatusGap />
    <UnitButton $w={72}>
      <Svg w={16}><path d="M2.500 3V13L13 3M2.500 6Q6 5 8 8" stroke="#aaa" /><Ring x={2.500} y={2.500} r={1.600} color="#aaa" dot={0.800} /><Ring x={2.500} y={13.500} r={1.600} color="#fff" dot={0.800} /><Ring x={13.500} y={2.500} r={1.600} color="#aaa" dot={0.800} /></Svg>
      <Title>Gons</Title><Caret color="#fff" />
    </UnitButton>
    <StatusGap />
    <UnitButton $w={70}>
      <CoordIcon size={16} top="#fff" line="#bbb" sw={1.700} />
      <Title>None</Title><Caret color="#fff" />
    </UnitButton>
  </StatusBar>
);

export default function App() {
  return (
    <Window>
      <GlobalStyle />
      <Header />
      <RibbonBar />
      <Workspace>
        <Navigator />
        <Inspector />
        <Properties />
      </Workspace>
      <Status />
    </Window>
  );
}
